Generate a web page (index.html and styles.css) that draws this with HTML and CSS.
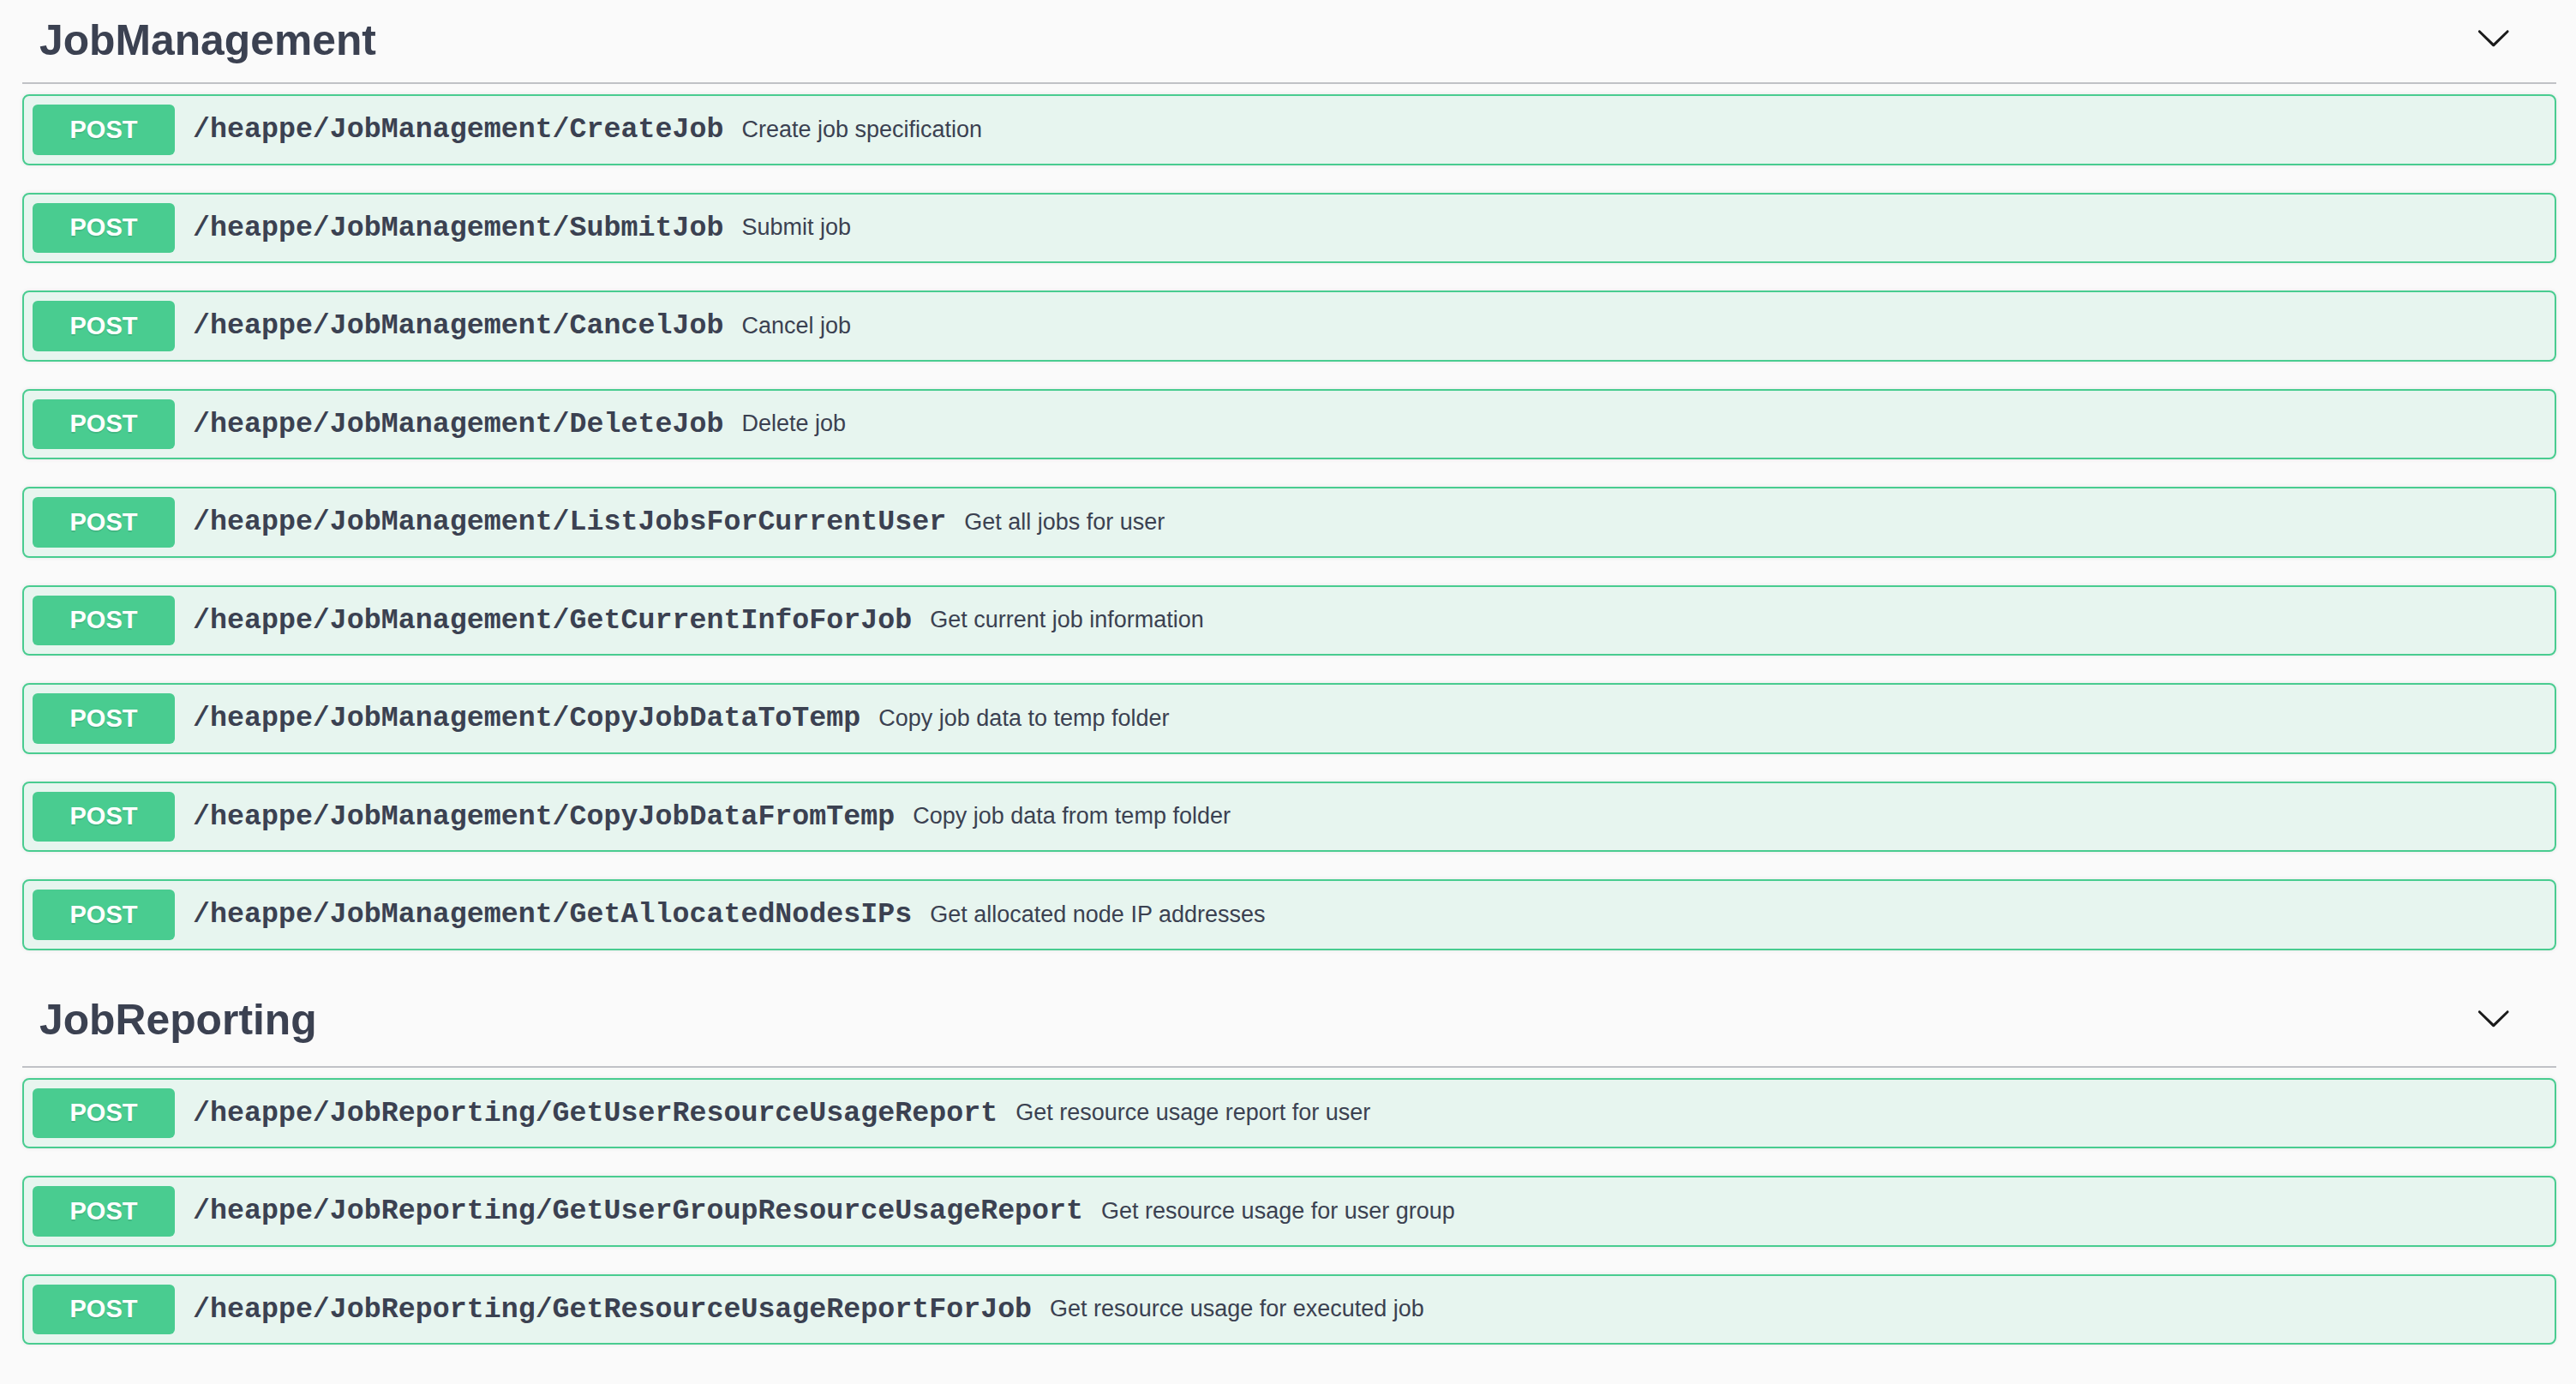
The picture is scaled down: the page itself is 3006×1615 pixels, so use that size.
FILE: index.html
```html
<!DOCTYPE html>
<html lang="en">
<head>
<meta charset="utf-8">
<title>HEAppE API</title>
<link rel="stylesheet" href="styles.css">
</head>
<body>
<div class="wrapper">
  <section class="tag-section first">
    <h3 class="tag">
      <span class="tag-name">JobManagement</span>
      <svg class="arrow" viewBox="0 0 20 20"><path d="M17.418 6.109c.272-.268.709-.268.979 0s.271.701 0 .969l-7.908 7.83c-.27.268-.707.268-.979 0l-7.908-7.83c-.27-.268-.27-.701 0-.969.271-.268.709-.268.979 0L10 13.25l7.418-7.141z"/></svg>
    </h3>
    <div class="ops">
      <div class="opblock"><span class="method">POST</span><span class="path">/heappe/JobManagement/CreateJob</span><span class="desc">Create job specification</span></div>
      <div class="opblock"><span class="method">POST</span><span class="path">/heappe/JobManagement/SubmitJob</span><span class="desc">Submit job</span></div>
      <div class="opblock"><span class="method">POST</span><span class="path">/heappe/JobManagement/CancelJob</span><span class="desc">Cancel job</span></div>
      <div class="opblock"><span class="method">POST</span><span class="path">/heappe/JobManagement/DeleteJob</span><span class="desc">Delete job</span></div>
      <div class="opblock"><span class="method">POST</span><span class="path">/heappe/JobManagement/ListJobsForCurrentUser</span><span class="desc">Get all jobs for user</span></div>
      <div class="opblock"><span class="method">POST</span><span class="path">/heappe/JobManagement/GetCurrentInfoForJob</span><span class="desc">Get current job information</span></div>
      <div class="opblock"><span class="method">POST</span><span class="path">/heappe/JobManagement/CopyJobDataToTemp</span><span class="desc">Copy job data to temp folder</span></div>
      <div class="opblock"><span class="method">POST</span><span class="path">/heappe/JobManagement/CopyJobDataFromTemp</span><span class="desc">Copy job data from temp folder</span></div>
      <div class="opblock"><span class="method">POST</span><span class="path">/heappe/JobManagement/GetAllocatedNodesIPs</span><span class="desc">Get allocated node IP addresses</span></div>
    </div>
  </section>
  <section class="tag-section second">
    <h3 class="tag">
      <span class="tag-name">JobReporting</span>
      <svg class="arrow" viewBox="0 0 20 20"><path d="M17.418 6.109c.272-.268.709-.268.979 0s.271.701 0 .969l-7.908 7.83c-.27.268-.707.268-.979 0l-7.908-7.830c-.27-.268-.27-.701 0-.969.271-.268.709-.268.979 0L10 13.25l7.418-7.141z"/></svg>
    </h3>
    <div class="ops">
      <div class="opblock"><span class="method">POST</span><span class="path">/heappe/JobReporting/GetUserResourceUsageReport</span><span class="desc">Get resource usage report for user</span></div>
      <div class="opblock"><span class="method">POST</span><span class="path">/heappe/JobReporting/GetUserGroupResourceUsageReport</span><span class="desc">Get resource usage for user group</span></div>
      <div class="opblock"><span class="method">POST</span><span class="path">/heappe/JobReporting/GetResourceUsageReportForJob</span><span class="desc">Get resource usage for executed job</span></div>
    </div>
  </section>
</div>
</body>
</html>
```
FILE: styles.css
```css
* { box-sizing: border-box; }

html, body {
  margin: 0;
  padding: 0;
  background: #fafafa;
  color: #3b4151;
  font-family: "Liberation Sans", Arial, sans-serif;
}

.wrapper {
  padding: 0 23px 0 26px;
}

.tag-section {
  display: flex;
  flex-direction: column;
}

.tag-section.second {
  margin-top: 7px;
}

.tag {
  margin: 0;
  height: 98px;
  padding: 0 53px 9px 20px;
  display: flex;
  align-items: center;
  justify-content: space-between;
  border-bottom: 2px solid rgba(59, 65, 81, 0.3);
}

.first .tag {
  padding-bottom: 1px;
}

.tag-name {
  font-size: 49.8px;
  font-weight: 700;
  color: #3b4151;
  line-height: 1.2;
}

.arrow {
  width: 41.5px;
  height: 41.5px;
  margin-bottom: 7px;
  fill: #1b1b1b;
  flex: none;
}

.ops {
  padding-top: 12px;
}

.opblock {
  display: flex;
  align-items: center;
  height: 82.5px;
  margin-bottom: 32px;
  padding: 0 10px;
  border: 2px solid #49cc90;
  border-radius: 8px;
  background: rgba(73, 204, 144, 0.1);
  box-shadow: 0 0 5px rgba(0, 0, 0, 0.08);
}

.method {
  flex: none;
  width: 166px;
  height: 58.5px;
  display: flex;
  align-items: center;
  justify-content: center;
  background: #49cc90;
  color: #fff;
  border-radius: 6px;
  font-family: "Liberation Sans", Arial, sans-serif;
  font-size: 29px;
  font-weight: 700;
  text-shadow: 0 2px 0 rgba(0, 0, 0, 0.1);
}

.path {
  padding: 0 21px;
  font-family: "Liberation Mono", "Courier New", monospace;
  font-size: 33.3px;
  font-weight: 700;
  color: #3b4151;
  white-space: nowrap;
}

.desc {
  font-family: "Liberation Sans", Arial, sans-serif;
  font-size: 27px;
  color: #3b4151;
  white-space: nowrap;
}
```
